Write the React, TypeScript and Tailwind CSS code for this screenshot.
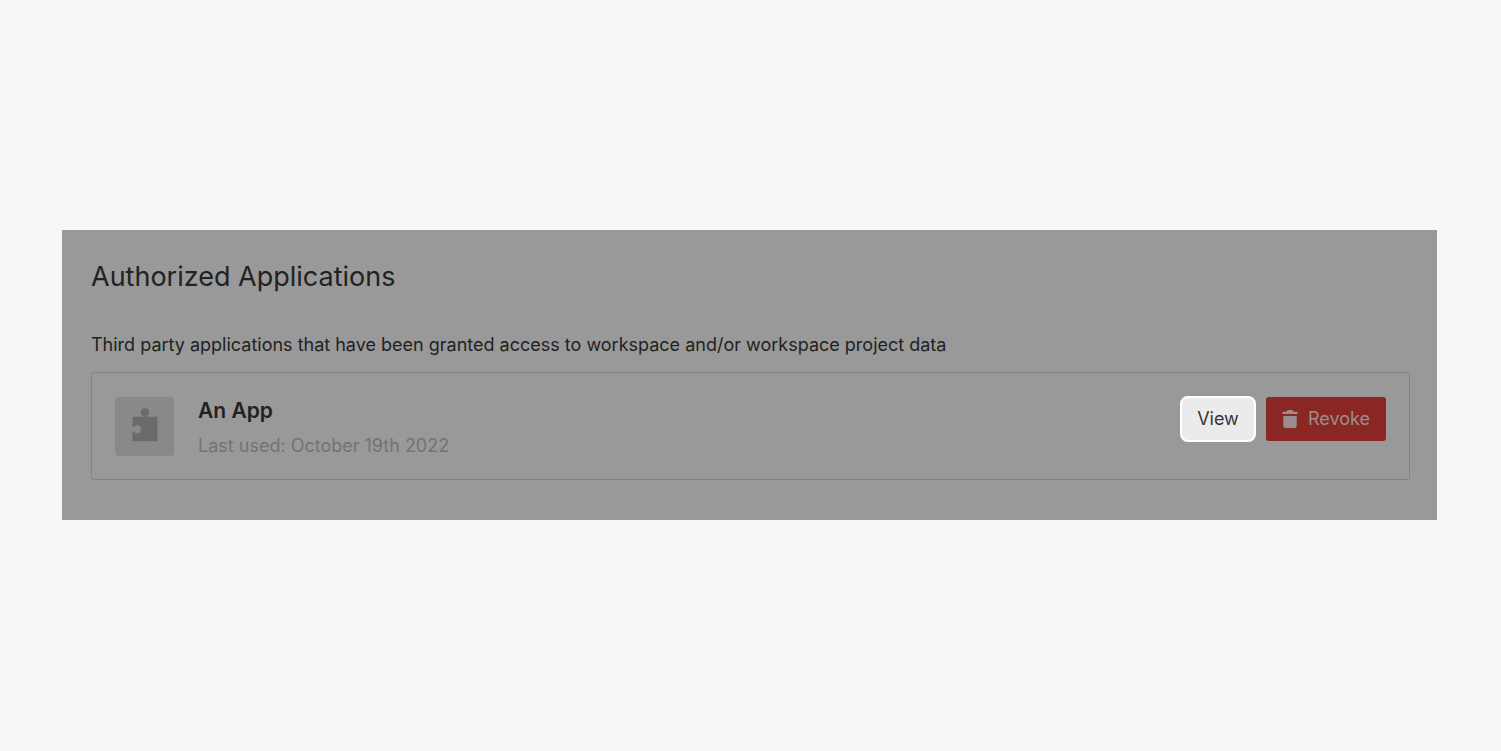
function PuzzleIcon() {
  return (
    <svg viewBox="0 0 26 34" className="h-[34px] w-[26px]" fill="#6a6b6d" aria-hidden="true">
      <path d="M0.5 8.8H11.3V7.9C9.7 7.2 8.7 6 8.7 4.4C8.7 1.9 10.5 0.3 13 0.3C15.5 0.3 17.3 1.9 17.3 4.4C17.3 6 16.3 7.2 14.7 7.9V8.8H25.5V33.2H0.5V23.8H2.2C2.8 24.8 3.8 25.4 5 25.4C7.4 25.4 8.8 23.6 8.8 21.2C8.8 18.8 7.4 17 5 17C3.8 17 2.8 17.6 2.2 18.8H0.5Z" />
    </svg>
  );
}

function TrashIcon() {
  return (
    <svg viewBox="0 0 16 20" className="h-5 w-4" fill="#9a8f8e" aria-hidden="true">
      <path d="M1.5 2.7H4.8V2.2Q5.2 1 6.5 1H9.5Q10.8 1 11.2 2.2V2.7H14.5Q15.5 2.7 15.5 3.7V5H0.5V3.7Q0.5 2.7 1.5 2.7Z" />
      <path d="M1.3 6.9H14.7V16.4Q14.7 18.9 12.2 18.9H3.8Q1.3 18.9 1.3 16.4Z" />
    </svg>
  );
}

export default function App() {
  return (
    <main className="min-h-screen bg-[#f6f7f9] py-[230px] pr-16 pl-[62px] font-['Inter',sans-serif]">
      <section className="bg-[#999999] px-[29px] pt-7 pb-10 text-[#222222]">
        <div className="-mr-0.5">
          <h1 className="text-[27px] leading-[38px]">Authorized Applications</h1>
          <p className="mt-[38px] text-lg leading-[22px]">
            Third party applications that have been granted access to workspace and/or workspace project data
          </p>
          <article className="mt-4 flex items-start gap-6 rounded-[3px] border border-[#838383] px-[23px] pt-6 pb-[21px]">
            <div className="flex size-[59px] shrink-0 items-center justify-center rounded bg-[#88898b] pb-1">
              <PuzzleIcon />
            </div>
            <div className="min-w-0 flex-1">
              <h2 className="text-[21px] leading-7 font-semibold">An App</h2>
              <p className="mt-[9px] text-lg leading-6 text-[#737373]">Last used: October 19th 2022</p>
            </div>
            <div className="flex shrink-0 items-center gap-2.5">
              <button
                type="button"
                className="-my-px h-[46px] w-[76px] rounded-lg border-2 border-white bg-[#ebebeb] text-lg text-[#363636]"
              >
                View
              </button>
              <button
                type="button"
                className="flex h-11 w-[120px] items-center justify-center gap-2.5 rounded-[3px] bg-[#8a2722] text-lg text-[#9a8f8e]"
              >
                <TrashIcon />
                Revoke
              </button>
            </div>
          </article>
        </div>
      </section>
    </main>
  );
}
